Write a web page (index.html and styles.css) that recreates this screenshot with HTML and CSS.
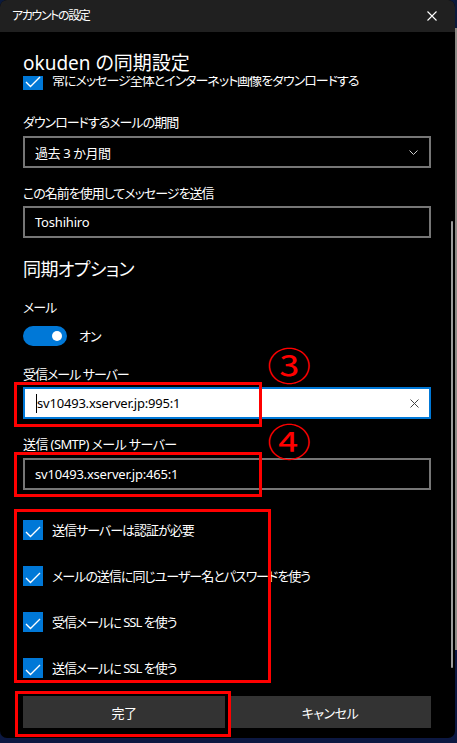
FILE: index.html
```html
<!DOCTYPE html>
<html lang="ja">
<head>
<meta charset="utf-8">
<title>アカウントの設定</title>
<link rel="stylesheet" href="styles.css">
</head>
<body>
<div class="window">
  <div class="titlebar">
    <span class="title">アカウントの設定</span>
    <svg class="close" width="10" height="10" viewBox="0 0 10 10"><path d="M0.5 0.5 L9.5 9.5 M9.5 0.5 L0.5 9.5" stroke="#ffffff" stroke-width="1.1" fill="none"/></svg>
  </div>
  <div class="header"><h1 class="heading">okuden の同期設定</h1></div>
  <div class="scroll">
    <div class="content">
      <div class="check first">
        <span class="box"><svg width="20" height="20" viewBox="0 0 20 20"><path d="M3 12 L7.5 16.5 L17 7" stroke="#fff" stroke-width="1.4" fill="none"/></svg></span>
        <span class="check-text">常にメッセージ全体とインターネット画像をダウンロードする</span>
      </div>

      <div class="label l1">ダウンロードするメールの期間</div>
      <div class="input select">
        <span>過去 3 か月間</span>
        <svg width="9" height="5" viewBox="0 0 9 5"><path d="M0.5 0.5 L4.5 4.5 L8.5 0.5" stroke="#cfcfcf" stroke-width="1" fill="none"/></svg>
      </div>

      <div class="label l2">この名前を使用してメッセージを送信</div>
      <div class="input">Toshihiro</div>

      <h2 class="subheading">同期オプション</h2>

      <div class="label l3">メール</div>
      <div class="toggle-row">
        <span class="toggle"><span class="knob"></span></span>
        <span class="toggle-text">オン</span>
      </div>

      <div class="label l4">受信メール サーバー</div>
      <div class="input active">
        <span class="caret"></span><span class="value">sv10493.xserver.jp:995:1</span>
        <svg class="clear" width="9" height="9" viewBox="0 0 9 9"><path d="M0.5 0.5 L8.5 8.5 M8.5 0.5 L0.5 8.5" stroke="#444" stroke-width="1" fill="none"/></svg>
      </div>

      <div class="label l5">送信 (SMTP) メール サーバー</div>
      <div class="input">sv10493.xserver.jp:465:1</div>

      <div class="checks">
        <div class="check">
          <span class="box"><svg width="20" height="20" viewBox="0 0 20 20"><path d="M3 12 L7.5 16.5 L17 7" stroke="#fff" stroke-width="1.4" fill="none"/></svg></span>
          <span class="check-text">送信サーバーは認証が必要</span>
        </div>
        <div class="check">
          <span class="box"><svg width="20" height="20" viewBox="0 0 20 20"><path d="M3 12 L7.5 16.5 L17 7" stroke="#fff" stroke-width="1.4" fill="none"/></svg></span>
          <span class="check-text">メールの送信に同じユーザー名とパスワードを使う</span>
        </div>
        <div class="check">
          <span class="box"><svg width="20" height="20" viewBox="0 0 20 20"><path d="M3 12 L7.5 16.5 L17 7" stroke="#fff" stroke-width="1.4" fill="none"/></svg></span>
          <span class="check-text">受信メールに SSL を使う</span>
        </div>
        <div class="check">
          <span class="box"><svg width="20" height="20" viewBox="0 0 20 20"><path d="M3 12 L7.5 16.5 L17 7" stroke="#fff" stroke-width="1.4" fill="none"/></svg></span>
          <span class="check-text">送信メールに SSL を使う</span>
        </div>
      </div>
    </div>
  </div>
  <div class="footer">
    <button class="btn">完了</button>
    <button class="btn">キャンセル</button>
  </div>

  <div class="scrollbar"></div>

  <div class="mark mark-box3"></div>
  <div class="mark mark-box4"></div>
  <div class="mark mark-checks"></div>
  <div class="mark mark-done"></div>
  <div class="num num3">③</div>
  <div class="num num4">④</div>
</div>
</body>
</html>
```

FILE: styles.css
```css
* { box-sizing: border-box; }
html, body { margin: 0; padding: 0; }
body {
  width: 457px;
  height: 743px;
  overflow: hidden;
  background: linear-gradient(#0b1a3c 0, #0b1a3c 28px, #8d8a86 28px, #8d8a86 650px, #0c1842 650px);
  font-family: "Noto Sans", "Noto Sans CJK JP", sans-serif;
  font-feature-settings: "palt";
  color: #ffffff;
}
.window {
  position: relative;
  width: 455px;
  height: 738px;
  background: #000000;
  border-radius: 7px;
  overflow: hidden;
  display: flex;
  flex-direction: column;
}
.titlebar {
  height: 32px;
  flex: none;
  background: #202020;
  display: flex;
  align-items: center;
  justify-content: space-between;
  padding: 0 18px 0 12px;
}
.title {
  font-size: 12px;
  line-height: 16px;
  letter-spacing: -1.4px;
}
.close { display: block; }
.header {
  flex: none;
  height: 44px;
  padding: 18px 23px 0;
}
.heading {
  margin: 0;
  font-size: 19px;
  line-height: 26px;
  font-weight: 400;
}
.scroll {
  flex: 1;
  overflow: hidden;
}
.content {
  margin-top: -6px;
  padding: 0 24px 0 23px;
  display: flex;
  flex-direction: column;
}
.check {
  display: flex;
  align-items: center;
  height: 20px;
  gap: 9px;
}
.box {
  width: 20px;
  height: 20px;
  background: #0078d7;
  flex: none;
}
.box svg { display: block; }
.check-text {
  font-size: 13px;
  line-height: 20px;
  white-space: nowrap;
  letter-spacing: -1px;
}
.label {
  font-size: 13px;
  line-height: 20px;
  margin-bottom: 3px;
  letter-spacing: -1px;
}
.l1 { margin-top: 22px; margin-bottom: 4px; }
.l2 { margin-top: 15px; }
.l3 { margin-top: 15px; }
.l4 { margin-top: 18px; }
.l5 { margin-top: 15px; margin-bottom: 4px; letter-spacing: -0.6px; }
.input {
  height: 32px;
  border: 2px solid #767676;
  display: flex;
  align-items: center;
  padding: 0 10px;
  font-size: 13px;
  letter-spacing: -0.2px;
  color: #ffffff;
}
.select {
  justify-content: space-between;
  padding-right: 11px;
}
.select span { letter-spacing: -0.4px; }
.select svg { display: block; }
.active {
  background: #ffffff;
  border-color: #0078d7;
  color: #000000;
  padding-left: 11px;
}
.caret {
  width: 1px;
  height: 19px;
  background: #000;
  flex: none;
}
.value { flex: 1; }
.clear { display: block; margin-right: 0; }
.subheading {
  margin: 18px 0 0;
  font-size: 18px;
  line-height: 26px;
  font-weight: 400;
  letter-spacing: -0.6px;
}
.toggle-row {
  display: flex;
  align-items: center;
  gap: 12px;
  margin-top: 6px;
  height: 20px;
}
.toggle {
  width: 44px;
  height: 20px;
  border-radius: 10px;
  background: #0078d7;
  display: flex;
  align-items: center;
  justify-content: flex-end;
  padding-right: 5px;
}
.knob {
  width: 10px;
  height: 10px;
  border-radius: 50%;
  background: #ffffff;
}
.toggle-text {
  font-size: 13px;
  line-height: 20px;
  letter-spacing: -1px;
}
.checks {
  margin-top: 30px;
  display: flex;
  flex-direction: column;
  gap: 26px;
}
.footer {
  flex: none;
  height: 52px;
  padding: 10px 24px 10px 23px;
  display: flex;
  gap: 4px;
}
.btn {
  flex: 1;
  height: 32px;
  border: none;
  background: #333333;
  color: #ffffff;
  font-family: "Noto Sans", "Noto Sans CJK JP", sans-serif;
  font-feature-settings: "palt";
  font-size: 13px;
  letter-spacing: -0.5px;
  padding: 0;
}
.scrollbar {
  position: absolute;
  left: 451px;
  top: 221px;
  width: 2px;
  height: 447px;
  border-radius: 1px;
  background: #9b9b9b;
}
.mark {
  position: absolute;
  border: 3px solid #ff0000;
}
.mark-box3 { left: 14px; top: 382px; width: 248px; height: 45px; }
.mark-box4 { left: 14px; top: 452px; width: 248px; height: 45px; }
.mark-checks { left: 14px; top: 509px; width: 257px; height: 174px; }
.mark-done { left: 15px; top: 691px; width: 216px; height: 46px; }
.num {
  position: absolute;
  color: #ff0000;
  font-family: "Noto Sans CJK JP", sans-serif;
  font-size: 44px;
  line-height: 44px;
  transform: scaleY(0.86);
}
.num3 { left: 267px; top: 342px; }
.num4 { left: 267px; top: 418px; }
```
